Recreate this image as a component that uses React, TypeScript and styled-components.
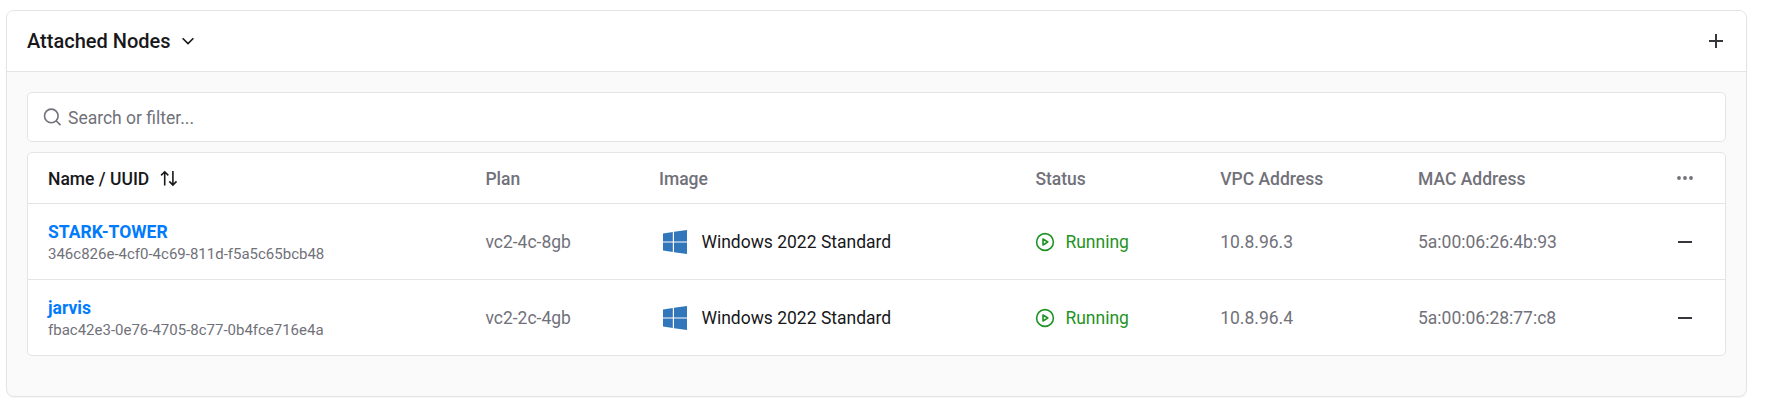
import React, { useState } from 'react';
import styled, { createGlobalStyle } from 'styled-components';

// ============================================================================
// TYPES
// ============================================================================

interface AttachedNode {
  id: string;
  name: string;
  plan: string;
  image: string;
  status: string;
  vpcAddress: string;
  macAddress: string;
}

// ============================================================================
// DATA
// ============================================================================

const NODES: AttachedNode[] = [
  {
    id: '346c826e-4cf0-4c69-811d-f5a5c65bcb48',
    name: 'STARK-TOWER',
    plan: 'vc2-4c-8gb',
    image: 'Windows 2022 Standard',
    status: 'Running',
    vpcAddress: '10.8.96.3',
    macAddress: '5a:00:06:26:4b:93',
  },
  {
    id: 'fbac42e3-0e76-4705-8c77-0b4fce716e4a',
    name: 'jarvis',
    plan: 'vc2-2c-4gb',
    image: 'Windows 2022 Standard',
    status: 'Running',
    vpcAddress: '10.8.96.4',
    macAddress: '5a:00:06:28:77:c8',
  },
];

// ============================================================================
// STYLED COMPONENTS
// ============================================================================

const colors = {
  text: '#18181b',
  muted: '#71717a',
  border: '#e4e4e7',
  surface: '#fafafa',
  link: '#007bfc',
  running: '#1f9324',
  windows: '#3277bc',
};

const GlobalStyle = createGlobalStyle`
  *, *::before, *::after {
    box-sizing: border-box;
  }

  body {
    margin: 0;
    background: #ffffff;
    color: ${colors.text};
    font-family: Roboto, sans-serif;
    font-size: 17.5px;
    line-height: 24px;
  }
`;

const Page = styled.main`
  padding: 10px 18px 19px 6px;
`;

const Card = styled.section`
  overflow: hidden;
  background: ${colors.surface};
  border: 1px solid ${colors.border};
  border-radius: 8px;
  box-shadow: 0 1px 2px rgba(0, 0, 0, 0.04);
`;

const CardHeader = styled.header`
  display: flex;
  align-items: center;
  justify-content: space-between;
  height: 61px;
  padding: 0 20px;
  background: #ffffff;
  border-bottom: 1px solid ${colors.border};
`;

const CardTitle = styled.h2`
  display: flex;
  align-items: center;
  gap: 9px;
  margin: 0;
  font-size: 20px;
  font-weight: 500;
`;

const CardBody = styled.div`
  display: flex;
  flex-direction: column;
  gap: 10px;
  padding: 20px 20px 40px;
`;

const IconButton = styled.button<{ $muted?: boolean }>`
  display: flex;
  align-items: center;
  justify-content: center;
  width: 20px;
  height: 20px;
  padding: 0;
  background: none;
  border: none;
  color: ${({ $muted }) => ($muted ? colors.muted : '#36363b')};
  cursor: pointer;
`;

const SearchBox = styled.label`
  display: flex;
  align-items: center;
  gap: 6px;
  height: 50px;
  padding: 0 14px;
  background: #ffffff;
  border: 1px solid ${colors.border};
  border-radius: 5px;
  color: ${colors.muted};
`;

const SearchInput = styled.input`
  flex: 1;
  padding: 1px 0 0;
  background: none;
  border: none;
  outline: none;
  color: ${colors.text};
  font: inherit;

  &::placeholder {
    color: ${colors.muted};
    opacity: 1;
  }
`;

const Table = styled.div`
  background: #ffffff;
  border: 1px solid ${colors.border};
  border-radius: 5px;
`;

const Row = styled.div<{ $head?: boolean }>`
  display: grid;
  grid-template-columns: 437.4px 173.6px 376.4px 184.8px 197.8px 1fr;
  align-items: center;
  height: ${({ $head }) => ($head ? '51px' : '76px')};
  padding: ${({ $head }) => ($head ? '2px 30px 0 20px' : '1px 30px 0 20px')};
  border-bottom: 1px solid ${colors.border};
  color: ${colors.muted};
  font-weight: ${({ $head }) => ($head ? 500 : 400)};

  &:last-child {
    height: 75px;
    border-bottom: none;
  }
`;

const SortHeading = styled.div`
  display: flex;
  align-items: center;
  gap: 10px;
  color: ${colors.text};
`;

const LastCell = styled.div`
  display: flex;
  align-items: center;
  justify-content: space-between;
`;

const NameCell = styled.div`
  display: flex;
  flex-direction: column;
`;

const NodeLink = styled.a`
  color: ${colors.link};
  font-weight: 700;
  line-height: 24px;
  text-decoration: none;
`;

const Uuid = styled.span`
  font-size: 15px;
  line-height: 20px;
`;

const ImageCell = styled.div`
  display: flex;
  align-items: center;
  gap: 14.4px;
  padding-left: 4px;
  color: ${colors.text};
`;

const StatusCell = styled.div`
  display: flex;
  align-items: center;
  gap: 10px;
  color: ${colors.running};
`;

// ============================================================================
// ICONS
// ============================================================================

const ChevronIcon = () => (
  <svg width="16" height="16" viewBox="0 0 16 16" fill="none" stroke="currentColor" strokeWidth="1.6">
    <path d="M2.6 5.2 8 10.6l5.4-5.4" />
  </svg>
);

const PlusIcon = () => (
  <svg width="14" height="14" viewBox="0 0 14 14" fill="none" stroke="currentColor" strokeWidth="2">
    <path d="M7 0v14M0 7h14" />
  </svg>
);

const MinusIcon = () => (
  <svg width="14" height="14" viewBox="0 0 14 14" fill="none" stroke="currentColor" strokeWidth="2">
    <path d="M0 7h14" />
  </svg>
);

const DotsIcon = () => (
  <svg width="16" height="6" viewBox="0 0 16 6" fill="currentColor">
    <circle cx="2" cy="2" r="1.9" />
    <circle cx="8" cy="2" r="1.9" />
    <circle cx="14" cy="2" r="1.9" />
  </svg>
);

const SearchIcon = () => (
  <svg width="20" height="20" viewBox="0 0 20 20" fill="none" stroke="currentColor" strokeWidth="1.6">
    <circle cx="9.3" cy="8.9" r="6.8" />
    <path d="m14.1 13.7 4.4 4.4" />
  </svg>
);

const SortIcon = () => (
  <svg width="20" height="18" viewBox="0 0 20 18" fill="none" stroke="currentColor" strokeWidth="1.6">
    <path d="M5.7 15.4V1.8M2.1 5.4l3.6-3.6 3.6 3.6M13.9.9V15M10.3 11.4l3.6 3.6 3.6-3.6" />
  </svg>
);

const WindowsIcon = () => (
  <svg width="24" height="24" viewBox="0 0 24 24" fill={colors.windows}>
    <path d="M0 3.4 9.8 2v9.4H0zM11 1.8 24 0v11.4H11zM0 12.5h9.8v9.4L0 20.6zM11 12.5h13V24l-13-1.8z" />
  </svg>
);

const PlayIcon = () => (
  <svg width="20" height="20" viewBox="0 0 20 20" fill="none" stroke="currentColor" strokeWidth="1.6">
    <circle cx="10" cy="10" r="8.4" />
    <path d="M8 7v6l4.8-3z" strokeLinejoin="round" />
  </svg>
);

// ============================================================================
// COMPONENT
// ============================================================================

const App: React.FC = () => {
  const [query, setQuery] = useState('');

  const nodes = NODES.filter((node) =>
    `${node.name} ${node.id}`.toLowerCase().includes(query.toLowerCase())
  );

  return (
    <>
      <GlobalStyle />
      <Page>
        <Card>
          <CardHeader>
            <CardTitle>
              Attached Nodes
              <ChevronIcon />
            </CardTitle>
            <IconButton>
              <PlusIcon />
            </IconButton>
          </CardHeader>

          <CardBody>
            <SearchBox>
              <SearchIcon />
              <SearchInput
                placeholder="Search or filter..."
                value={query}
                onChange={(e) => setQuery(e.target.value)}
              />
            </SearchBox>

            <Table>
              <Row $head>
                <SortHeading>
                  Name / UUID
                  <SortIcon />
                </SortHeading>
                <div>Plan</div>
                <div>Image</div>
                <div>Status</div>
                <div>VPC Address</div>
                <LastCell>
                  MAC Address
                  <IconButton $muted>
                    <DotsIcon />
                  </IconButton>
                </LastCell>
              </Row>

              {nodes.map((node) => (
                <Row key={node.id}>
                  <NameCell>
                    <NodeLink href="#">{node.name}</NodeLink>
                    <Uuid>{node.id}</Uuid>
                  </NameCell>
                  <div>{node.plan}</div>
                  <ImageCell>
                    <WindowsIcon />
                    {node.image}
                  </ImageCell>
                  <StatusCell>
                    <PlayIcon />
                    {node.status}
                  </StatusCell>
                  <div>{node.vpcAddress}</div>
                  <LastCell>
                    {node.macAddress}
                    <IconButton>
                      <MinusIcon />
                    </IconButton>
                  </LastCell>
                </Row>
              ))}
            </Table>
          </CardBody>
        </Card>
      </Page>
    </>
  );
};

export default App;
